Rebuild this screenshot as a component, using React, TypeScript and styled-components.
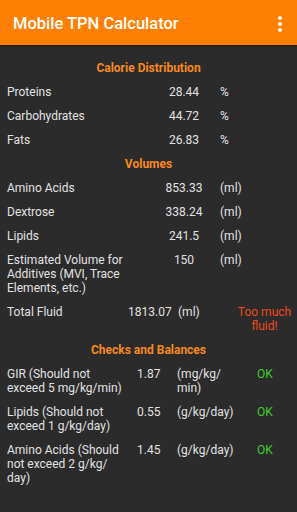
import React from 'react'
import styled, { createGlobalStyle } from 'styled-components'

const GlobalStyle = createGlobalStyle`
  html, body {
    margin: 0;
    padding: 0;
    background: #2b2b2b;
    font-family: Roboto, "Liberation Sans", sans-serif;
  }
`

const Screen = styled.div`
  width: 297px;
  height: 512px;
  display: flex;
  flex-direction: column;
  background: #2b2b2b;
  overflow: hidden;
`

const AppBar = styled.div`
  height: 45px;
  flex: none;
  display: flex;
  align-items: center;
  justify-content: space-between;
  padding: 2px 14px 0 13px;
  box-sizing: border-box;
  background: #ff8000;
  box-shadow: 0 1px 2px rgba(0, 0, 0, 0.5);
  position: relative;
  z-index: 2;
`

const Title = styled.div`
  color: #fff;
  font-size: 16.5px;
  font-weight: 500;
`

const Scroll = styled.div`
  flex: 1;
  overflow: hidden;
`

const Content = styled.div`
  padding-top: 16px;
  display: flex;
  flex-direction: column;
  gap: 10px;
  color: #e2e2e2;
  font-size: 12px;
  line-height: 14px;
`

const Heading = styled.div`
  text-align: center;
  color: #f88a1c;
  font-weight: 700;
  font-size: 12px;
`

const Row = styled.div<{ $cols: string }>`
  display: grid;
  grid-template-columns: ${p => p.$cols};
  padding: 0 2px 0 7px;
`

const Label = styled.div<{ $pad?: number }>`
  padding-right: ${p => p.$pad ?? 0}px;
`

const Value = styled.div<{ $center?: boolean }>`
  text-align: ${p => (p.$center ? 'center' : 'left')};
`

const Unit = styled.div<{ $indent?: number }>`
  padding-left: ${p => p.$indent ?? 0}px;
`

const Status = styled.div<{ $tone: 'ok' | 'bad' }>`
  text-align: center;
  color: ${p => (p.$tone === 'ok' ? '#3fcf2c' : '#f0481e')};
`

const Dots = () => (
  <svg width="6" height="18" viewBox="0 0 6 18">
    <circle cx="3" cy="3" r="2" fill="#fff" />
    <circle cx="3" cy="9" r="2" fill="#fff" />
    <circle cx="3" cy="15" r="2" fill="#fff" />
  </svg>
)

const simpleCols = '143px 68px 1fr'

const calories = [
  ['Proteins', '28.44'],
  ['Carbohydrates', '44.72'],
  ['Fats', '26.83'],
]

const volumes = [
  ['Amino Acids', '853.33'],
  ['Dextrose', '338.24'],
  ['Lipids', '241.5'],
  ['Estimated Volume for Additives (MVI, Trace Elements, etc.)', '150'],
]

const checks = [
  ['GIR (Should not exceed 5 mg/kg/min)', '1.87', '(mg/kg/ min)'],
  ['Lipids (Should not exceed 1 g/kg/day)', '0.55', '(g/kg/day)'],
  ['Amino Acids (Should not exceed 2 g/kg/ day)', '1.45', '(g/kg/day)'],
]

export default function App() {
  return (
    <>
      <GlobalStyle />
      <Screen>
        <AppBar>
          <Title>Mobile TPN Calculator</Title>
          <Dots />
        </AppBar>
        <Scroll>
          <Content>
            <Heading>Calorie Distribution</Heading>
            {calories.map(([name, val]) => (
              <Row key={name} $cols={simpleCols}>
                <Label>{name}</Label>
                <Value $center>{val}</Value>
                <Unit $indent={2}>%</Unit>
              </Row>
            ))}

            <Heading>Volumes</Heading>
            {volumes.map(([name, val]) => (
              <Row key={name} $cols={simpleCols}>
                <Label $pad={20}>{name}</Label>
                <Value $center>{val}</Value>
                <Unit $indent={2}>(ml)</Unit>
              </Row>
            ))}
            <Row $cols="121px 50px 56px 1fr">
              <Label>Total Fluid</Label>
              <Value>1813.07</Value>
              <Unit>(ml)</Unit>
              <Status $tone="bad">Too much fluid!</Status>
            </Row>

            <Heading>Checks and Balances</Heading>
            {checks.map(([name, val, unit]) => (
              <Row key={name} $cols="130px 40px 58px 60px">
                <Label $pad={10}>{name}</Label>
                <Value>{val}</Value>
                <Unit>{unit}</Unit>
                <Status $tone="ok">OK</Status>
              </Row>
            ))}
          </Content>
        </Scroll>
      </Screen>
    </>
  )
}
